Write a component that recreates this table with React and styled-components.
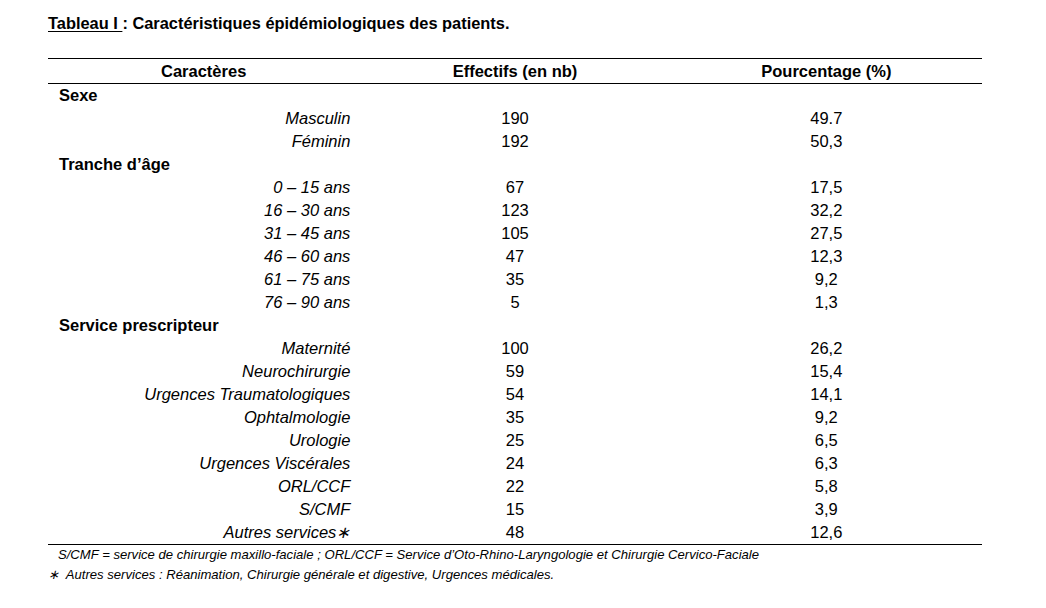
import React from 'react'
import styled, { createGlobalStyle } from 'styled-components'

const GlobalStyle = createGlobalStyle`
  body {
    margin: 0;
    background: #fff;
    font-family: "Liberation Sans Narrow", "Arial Narrow", "Liberation Sans", sans-serif;
    color: #000;
  }
`

const sections = [
  {
    title: 'Sexe',
    rows: [
      ['Masculin', '190', '49.7'],
      ['Féminin', '192', '50,3'],
    ],
  },
  {
    title: 'Tranche d’âge',
    rows: [
      ['0 – 15 ans', '67', '17,5'],
      ['16 – 30 ans', '123', '32,2'],
      ['31 – 45 ans', '105', '27,5'],
      ['46 – 60 ans', '47', '12,3'],
      ['61 – 75 ans', '35', '9,2'],
      ['76 – 90 ans', '5', '1,3'],
    ],
  },
  {
    title: 'Service prescripteur',
    rows: [
      ['Maternité', '100', '26,2'],
      ['Neurochirurgie', '59', '15,4'],
      ['Urgences Traumatologiques', '54', '14,1'],
      ['Ophtalmologie', '35', '9,2'],
      ['Urologie', '25', '6,5'],
      ['Urgences Viscérales', '24', '6,3'],
      ['ORL/CCF', '22', '5,8'],
      ['S/CMF', '15', '3,9'],
      ['Autres services∗', '48', '12,6'],
    ],
  },
]

const App = () => {
  return (
    <Page>
      <GlobalStyle />
      <Title>
        <Underlined>Tableau I </Underlined>: Caractéristiques épidémiologiques des patients.
      </Title>

      <Table>
        <thead>
          <tr>
            <HeadCell>Caractères</HeadCell>
            <HeadCell>Effectifs (en nb)</HeadCell>
            <HeadCell>Pourcentage (%)</HeadCell>
          </tr>
        </thead>
        <tbody>
          {sections.map((section) => (
            <React.Fragment key={section.title}>
              <tr>
                <SectionCell colSpan={3}>{section.title}</SectionCell>
              </tr>
              {section.rows.map(([label, count, pct]) => (
                <tr key={label}>
                  <LabelCell>{label}</LabelCell>
                  <ValueCell>{count}</ValueCell>
                  <ValueCell>{pct}</ValueCell>
                </tr>
              ))}
            </React.Fragment>
          ))}
        </tbody>
      </Table>

      <Note $indent>
        S/CMF = service de chirurgie maxillo-faciale ; ORL/CCF = Service d’Oto-Rhino-Laryngologie et Chirurgie Cervico-Faciale
      </Note>
      <Note>∗&nbsp; Autres services : Réanimation, Chirurgie générale et digestive, Urgences médicales.</Note>
    </Page>
  )
}

export default App

const Page = styled.div`
  padding: 12px 64px 0 48px;
  width: 934px;
`

const Title = styled.h1`
  margin: 0 0 24px;
  font-size: 16.4px;
  font-weight: bold;
  line-height: 22px;
`

const Underlined = styled.span`
  text-decoration: underline;
  text-underline-offset: 2px;
`

const Table = styled.table`
  width: 934px;
  border-collapse: collapse;
  table-layout: fixed;
  border-top: 1px solid #000;
  border-bottom: 1px solid #000;
  font-size: 16.5px;
  line-height: 19px;
`

const HeadCell = styled.th`
  height: 24px;
  padding: 0;
  font-weight: bold;
  text-align: center;
  border-bottom: 1px solid #000;
  vertical-align: middle;
`

const SectionCell = styled.td`
  height: 23px;
  padding: 0 0 0 11px;
  font-weight: bold;
`

const LabelCell = styled.td`
  height: 23px;
  padding: 0 9px 0 0;
  font-style: italic;
  text-align: right;
`

const ValueCell = styled.td`
  height: 23px;
  padding: 0;
  text-align: center;
`

const Note = styled.p`
  margin: 0;
  padding-left: ${({ $indent }) => ($indent ? '10px' : '0')};
  font-size: 13.1px;
  font-style: italic;
  line-height: 20px;
`
